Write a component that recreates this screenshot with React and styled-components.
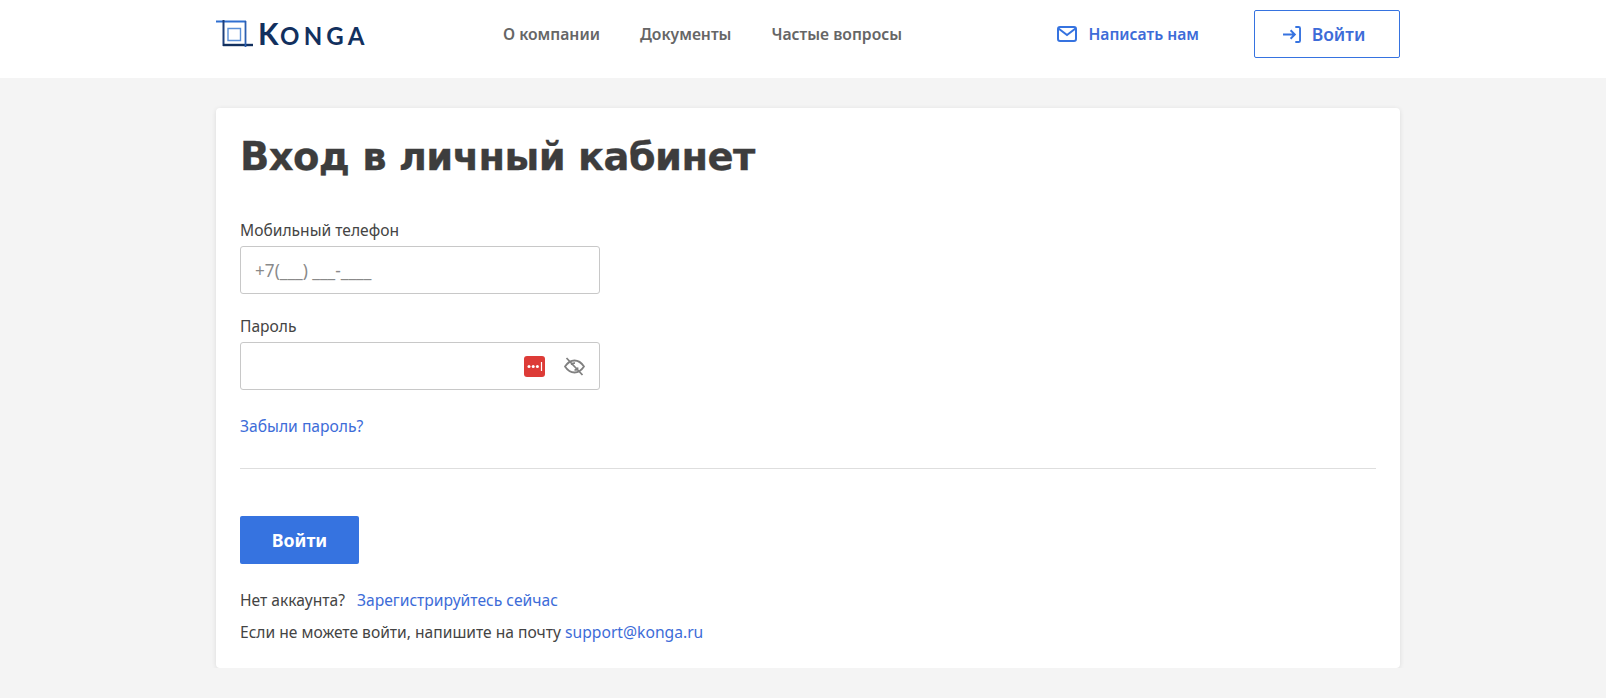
import React from "react";
import styled, { createGlobalStyle } from "styled-components";

const Global = createGlobalStyle`
  html, body { margin: 0; padding: 0; background: #f4f4f4; }
  body { font-family: "Noto Sans", "Open Sans", sans-serif; color: #3d3d3d; }
  * { box-sizing: border-box; }
`;
const Header = styled.header`
  height: 78px; background: #fff; padding-left: 216px;
`;
const HeaderInner = styled.div`
  width: 1184px; height: 68px; display: flex; align-items: center;
`;
const Logo = styled.a`
  display: flex; align-items: center; width: 287px;
`;
const LogoWord = styled.span`
  font-family: "Lato", sans-serif; font-size: 30px; line-height: 30px; font-weight: 700;
  margin-left: 5px; color: #12305e; letter-spacing: 1.5px;
  & > small { font-size: 24px; letter-spacing: 4.2px; font-weight: 700; }
`;
const Nav = styled.nav`
  display: flex; gap: 40px; flex: 1;
`;
const NavLink = styled.a`
  font-size: 15.7px; font-weight: 600; color: #666;
`;
const Contact = styled.a`
  display: flex; align-items: center; gap: 11px; font-size: 15.65px; font-weight: 600; color: #3d6cd8; margin-right: 55px;
`;
const LoginOutline = styled.button`
  width: 146px; height: 48px; border: 1px solid #3673e0; border-radius: 2px; background: #fff; padding: 0 6px 0 0;
  color: #3d6cd8; font: 600 17.5px "Noto Sans", sans-serif; display: flex; align-items: center; justify-content: center; gap: 11px;
`;
const Main = styled.main`
  padding: 30px 0 0 216px;
`;
const Card = styled.section`
  width: 1184px; height: 560px; background: #fff; border-radius: 4px;
  box-shadow: 0 1px 5px rgba(0,0,0,.1); padding: 24px 24px 0;
`;
const Title = styled.h1`
  margin: 0 0 38px; font-family: "DejaVu Sans", sans-serif; font-weight: 700; font-size: 38.5px; line-height: 50px; color: #3d3d3d; letter-spacing: -.6px;
  -webkit-text-stroke: .3px #3d3d3d;
`;
const Label = styled.label`
  display: block; font-size: 15.6px; line-height: 20px; color: #444; margin-bottom: 6px;
`;
const Field = styled.div`
  width: 360px; height: 48px; border: 1px solid #c8c8c8; border-radius: 3px; display: flex; align-items: center;
  padding: 0 14px; margin-bottom: 22px; color: #8a8a8a; font-size: 17.2px; background: #fff;
`;
const Spacer = styled.span` flex: 1; `;
const KeyBadge = styled.span`
  width: 21px; height: 21px; background: #dd3b37; border-radius: 3px; display: flex; align-items: center; justify-content: center; margin-right: 19px;
`;
const Link = styled.a`
  color: #3d6cd8; font-size: 15.65px; line-height: 20px;
`;
const Forgot = styled.div`
  margin-top: 26px; height: 20px; display: flex; align-items: center;
`;
const Divider = styled.hr`
  margin: 32px 0 47px; border: 0; border-top: 1px solid #dedede;
`;
const Submit = styled.button`
  display: block; width: 119px; height: 48px; background: #3673e0; border: 0; border-radius: 2px; color: #fff;
  font: 700 17.7px "Noto Sans", sans-serif;
`;
const Text = styled.p`
  margin: ${p => p.$top}px 0 0; font-size: 15.6px; line-height: 20px; color: #444;
`;
const GapLink = styled(Link)` margin-left: 12px; `;

const LogoMark = () => (
  <svg width="37" height="28" viewBox="0 0 37 28" fill="none">
    <path d="M0 1.5H30" stroke="#2f6fd0" strokeWidth="2" />
    <path d="M7.5 0V26" stroke="#1d3f7a" strokeWidth="2" />
    <path d="M7 25H37" stroke="#12305e" strokeWidth="2.4" />
    <path d="M29.5 1V27" stroke="#2c5fb0" strokeWidth="1.8" />
    <path d="M12 8.5H24.5V20.5H12Z" stroke="#5a8fd8" strokeWidth="1.4" />
  </svg>
);
const MailIcon = () => (
  <svg width="20" height="16" viewBox="0 0 20 16" fill="none" stroke="#3673e0" strokeWidth="2">
    <rect x="1" y="1" width="18" height="14" rx="2" />
    <path d="M1.5 2.5L10 9L18.5 2.5" />
  </svg>
);
const EnterIcon = () => (
  <svg width="18" height="17" viewBox="0 0 19 18" fill="none" stroke="#3673e0" strokeWidth="2">
    <path d="M0 9H12M8 4.5L12.5 9L8 13.5" />
    <path d="M13 1H16.5C17.4 1 18 1.6 18 2.5V15.5C18 16.4 17.4 17 16.5 17H13" />
  </svg>
);
const EyeIcon = () => (
  <svg width="21" height="19" viewBox="0 0 21 19" fill="none" stroke="#808080" strokeWidth="1.8">
    <path d="M1 9.5C4 5 7 3.5 10.5 3.5S17 5 20 9.5C17 14 14 15.5 10.5 15.5S4 14 1 9.5Z" />
    <path d="M7.5 8C8 6.5 9.5 6 11 6.2M13.8 10.5C13.5 12 12 13 10.5 12.8" />
    <path d="M2.5 1L18.5 18" />
  </svg>
);

export default function App() {
  return (
    <>
      <Global />
      <Header>
        <HeaderInner>
          <Logo><LogoMark /><LogoWord>K<small>ONGA</small></LogoWord></Logo>
          <Nav>
            <NavLink>О компании</NavLink>
            <NavLink>Документы</NavLink>
            <NavLink>Частые вопросы</NavLink>
          </Nav>
          <Contact><MailIcon />Написать нам</Contact>
          <LoginOutline><EnterIcon />Войти</LoginOutline>
        </HeaderInner>
      </Header>
      <Main>
        <Card>
          <Title>Вход в личный кабинет</Title>
          <Label>Мобильный телефон</Label>
          <Field>+7(___) ___-____</Field>
          <Label>Пароль</Label>
          <Field>
            <Spacer />
            <KeyBadge>
              <svg width="17" height="11" viewBox="0 0 17 11">
                <circle cx="3" cy="5.5" r="1.5" fill="#fff" /><circle cx="7.2" cy="5.5" r="1.5" fill="#fff" /><circle cx="11.4" cy="5.5" r="1.5" fill="#fff" />
                <path d="M15.5 1V10" stroke="#fff" strokeWidth="1.2" />
              </svg>
            </KeyBadge>
            <EyeIcon />
          </Field>
          <Forgot><Link>Забыли пароль?</Link></Forgot>
          <Divider />
          <Submit>Войти</Submit>
          <Text $top={26}>Нет аккаунта?<GapLink>Зарегистрируйтесь сейчас</GapLink></Text>
          <Text $top={12}>Если не можете войти, напишите на почту <Link>support@konga.ru</Link></Text>
        </Card>
      </Main>
    </>
  );
}
